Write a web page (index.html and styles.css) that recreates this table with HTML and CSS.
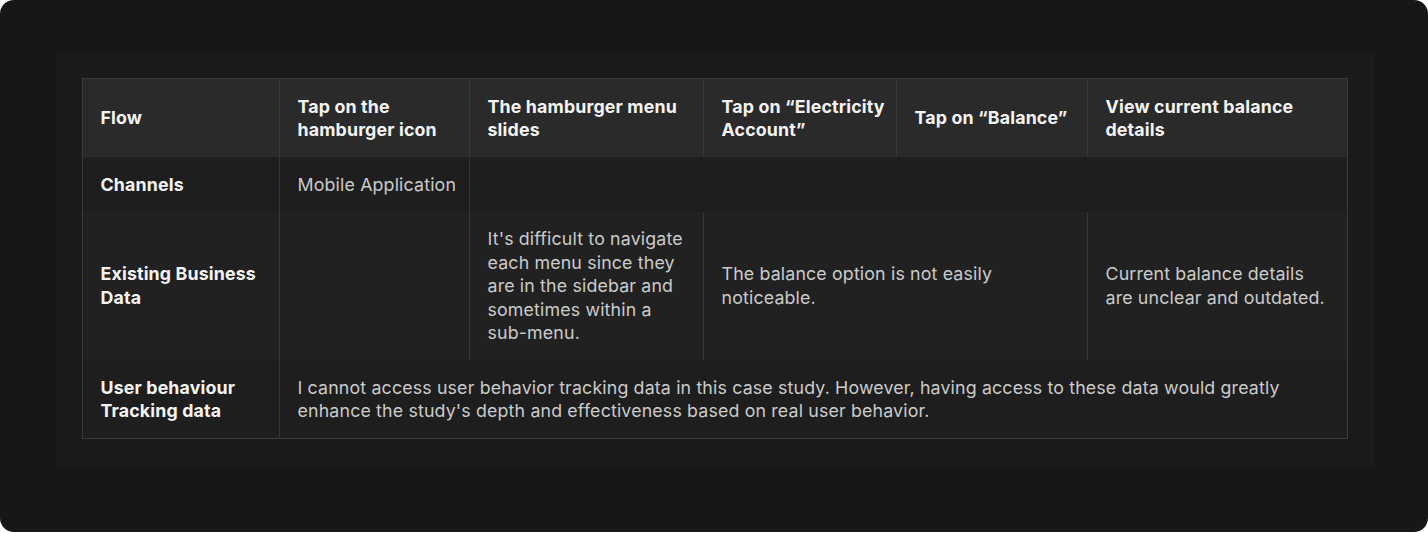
FILE: index.html
```html
<!DOCTYPE html>
<html lang="en">
<head>
<meta charset="utf-8">
<title>Journey table</title>
<link rel="stylesheet" href="styles.css">
</head>
<body>
<div class="frame">
  <div class="panel">
    <table class="journey">
      <colgroup>
        <col class="c1"><col class="c2"><col class="c3"><col class="c4"><col class="c5"><col class="c6">
      </colgroup>
      <thead>
        <tr class="head">
          <th>Flow</th>
          <th>Tap on the hamburger icon</th>
          <th>The hamburger menu slides</th>
          <th>Tap on “Electricity Account”</th>
          <th>Tap on “Balance”</th>
          <th>View current balance details</th>
        </tr>
      </thead>
      <tbody>
        <tr class="row-dark">
          <th>Channels</th>
          <td class="tight">Mobile Application</td>
          <td colspan="4"></td>
        </tr>
        <tr class="row-mid">
          <th>Existing Business Data</th>
          <td></td>
          <td>It's difficult to navigate each menu since they are in the sidebar and sometimes within a <span class="nowrap">sub-menu.</span></td>
          <td colspan="2">The balance option is not easily noticeable.</td>
          <td>Current balance details are unclear and outdated.</td>
        </tr>
        <tr class="row-dark">
          <th>User behaviour Tracking data</th>
          <td colspan="5">I cannot access user behavior tracking data in this case study. However, having access to these data would greatly enhance the study's depth and effectiveness based on real user behavior.</td>
        </tr>
      </tbody>
    </table>
  </div>
</div>
</body>
</html>
```

FILE: styles.css
```css
html, body {
  margin: 0;
  padding: 0;
  background: #ffffff;
}

body {
  font-family: "Inter", "Noto Sans", "Liberation Sans", sans-serif;
  width: 1428px;
  height: 533px;
}

.frame {
  box-sizing: border-box;
  width: 1428px;
  height: 532px;
  background: #171717;
  border-radius: 14px;
  padding: 52px 54px 0 56px;
}

.panel {
  box-sizing: border-box;
  width: 1318px;
  height: 416px;
  background: #1b1b1b;
  padding: 26px 26px 0 26px;
}

.journey {
  width: 1265px;
  table-layout: fixed;
  border-collapse: collapse;
  border: 1px solid #3a3a3a;
  font-size: 17.8px;
  line-height: 23.5px;
  letter-spacing: 0.15px;
}

.c1 { width: 197px; }
.c2 { width: 190px; }
.c3 { width: 234px; }
.c4 { width: 193px; }
.c5 { width: 191px; }
.c6 { width: 260px; }

.journey th,
.journey td {
  padding: 15.5px 18px 15.5px 17.5px;
  text-align: left;
  vertical-align: middle;
  border-left: 1px solid #363636;
}

.journey .head th {
  padding-right: 6px;
}

.journey td.tight {
  padding-right: 6px;
}

.journey th:first-child {
  border-left: none;
}

.journey th {
  font-weight: 700;
  color: #f3f3f3;
}

.journey td {
  font-weight: 400;
  color: #cbcbcb;
}

.nowrap {
  white-space: nowrap;
}

.head {
  background: #2a2a2a;
}

.row-dark {
  background: #1e1e1e;
}

.row-mid {
  background: #212121;
}
```
